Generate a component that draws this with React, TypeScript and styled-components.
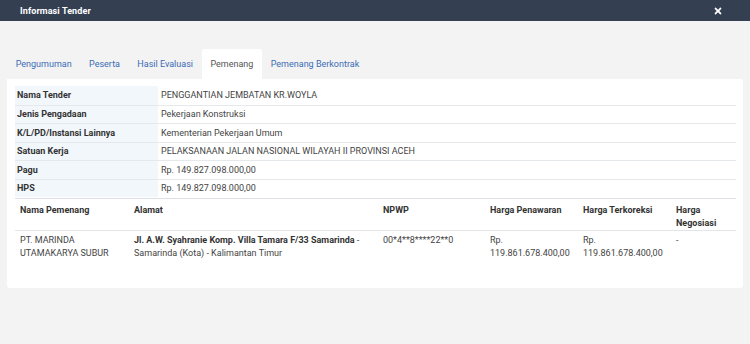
import React from "react";
import styled, { createGlobalStyle } from "styled-components";
import { FaTimes } from "react-icons/fa";

const Global = createGlobalStyle`
  html, body { margin: 0; padding: 0; background: #f3f3f3; }
  body { font-family: Roboto, "Liberation Sans", Arial, sans-serif; font-size: 9px; color: #444; }
  * { box-sizing: border-box; }
`;

const Page = styled.div`
  width: 750px;
  height: 344px;
  background: #f3f3f3;
  overflow: hidden;
`;

const Header = styled.div`
  height: 21px;
  background: #343f52;
  display: flex;
  align-items: center;
  justify-content: space-between;
  padding: 0 27px 0 20px;
  color: #fff;
`;

const Title = styled.div`
  font-weight: 700;
  font-size: 9px;
  letter-spacing: 0.1px;
`;

const Close = styled.span`
  display: flex;
  align-items: center;
  color: #fff;
  font-size: 10px;
`;

const Body = styled.div`
  padding: 28px 7px 0 7px;
`;

const Tabs = styled.div`
  display: flex;
  height: 30px;
`;

const Tab = styled.div<{ $active?: boolean }>`
  display: flex;
  align-items: center;
  padding: 0 8.7px;
  height: 30px;
  font-size: 9px;
  color: ${(p) => (p.$active ? "#555" : "#3b6cb4")};
  background: ${(p) => (p.$active ? "#fff" : "transparent")};
  border-radius: 2px 2px 0 0;
`;

const Panel = styled.div`
  background: #fff;
  border-radius: 0 3px 3px 3px;
  padding: 7px 7px 16px 8px;
  height: 209px;
`;

const InfoTable = styled.div`
  display: grid;
  grid-template-columns: 143px 1fr;
`;

const InfoLabel = styled.div<{ $first?: boolean }>`
  background: #f2f7fc;
  font-weight: 700;
  color: #333;
  height: 18.5px;
  display: flex;
  align-items: center;
  padding: 0 2px;
  border-top: ${(p) => (p.$first ? "none" : "1px solid #e6e9ec")};
`;

const InfoValue = styled.div<{ $first?: boolean }>`
  height: 18.5px;
  display: flex;
  align-items: center;
  padding: 0 3px;
  color: #444;
  border-top: ${(p) => (p.$first ? "none" : "1px solid #e6e9ec")};
`;

const WinTable = styled.div`
  display: grid;
  grid-template-columns: 114px 249px 107px 93px 93px 65px;
  border-top: 1px solid #dcdfe3;
  margin-top: 1px;
`;

const HeadCell = styled.div`
  font-weight: 700;
  color: #333;
  padding: 5px 5px 0 5px;
  line-height: 13px;
  height: 32px;
  border-bottom: 1px solid #e3e6e9;
`;

const Cell = styled.div`
  padding: 3px 5px;
  line-height: 13px;
  color: #444;
`;

const Strong = styled.b`
  font-weight: 700;
  color: #333;
`;

const info: [string, string][] = [
  ["Nama Tender", "PENGGANTIAN JEMBATAN KR.WOYLA"],
  ["Jenis Pengadaan", "Pekerjaan Konstruksi"],
  ["K/L/PD/Instansi Lainnya", "Kementerian Pekerjaan Umum"],
  ["Satuan Kerja", "PELAKSANAAN JALAN NASIONAL WILAYAH II PROVINSI ACEH"],
  ["Pagu", "Rp. 149.827.098.000,00"],
  ["HPS", "Rp. 149.827.098.000,00"],
];

const tabs = ["Pengumuman", "Peserta", "Hasil Evaluasi", "Pemenang", "Pemenang Berkontrak"];

export default function App() {
  return (
    <Page>
      <Global />
      <Header>
        <Title>Informasi Tender</Title>
        <Close>
          <FaTimes />
        </Close>
      </Header>
      <Body>
        <Tabs>
          {tabs.map((t) => (
            <Tab key={t} $active={t === "Pemenang"}>
              {t}
            </Tab>
          ))}
        </Tabs>
        <Panel>
          <InfoTable>
            {info.map(([k, v], i) => (
              <React.Fragment key={k}>
                <InfoLabel $first={i === 0}>{k}</InfoLabel>
                <InfoValue $first={i === 0}>{v}</InfoValue>
              </React.Fragment>
            ))}
          </InfoTable>
          <WinTable>
            <HeadCell>Nama Pemenang</HeadCell>
            <HeadCell>Alamat</HeadCell>
            <HeadCell>NPWP</HeadCell>
            <HeadCell>Harga Penawaran</HeadCell>
            <HeadCell>Harga Terkoreksi</HeadCell>
            <HeadCell>Harga Negosiasi</HeadCell>
            <Cell>PT. MARINDA UTAMAKARYA SUBUR</Cell>
            <Cell>
              <Strong>Jl. A.W. Syahranie Komp. Villa Tamara F/33 Samarinda</Strong> - Samarinda (Kota) - Kalimantan Timur
            </Cell>
            <Cell>00*4**8****22**0</Cell>
            <Cell>Rp. 119.861.678.400,00</Cell>
            <Cell>Rp. 119.861.678.400,00</Cell>
            <Cell>-</Cell>
          </WinTable>
        </Panel>
      </Body>
    </Page>
  );
}
